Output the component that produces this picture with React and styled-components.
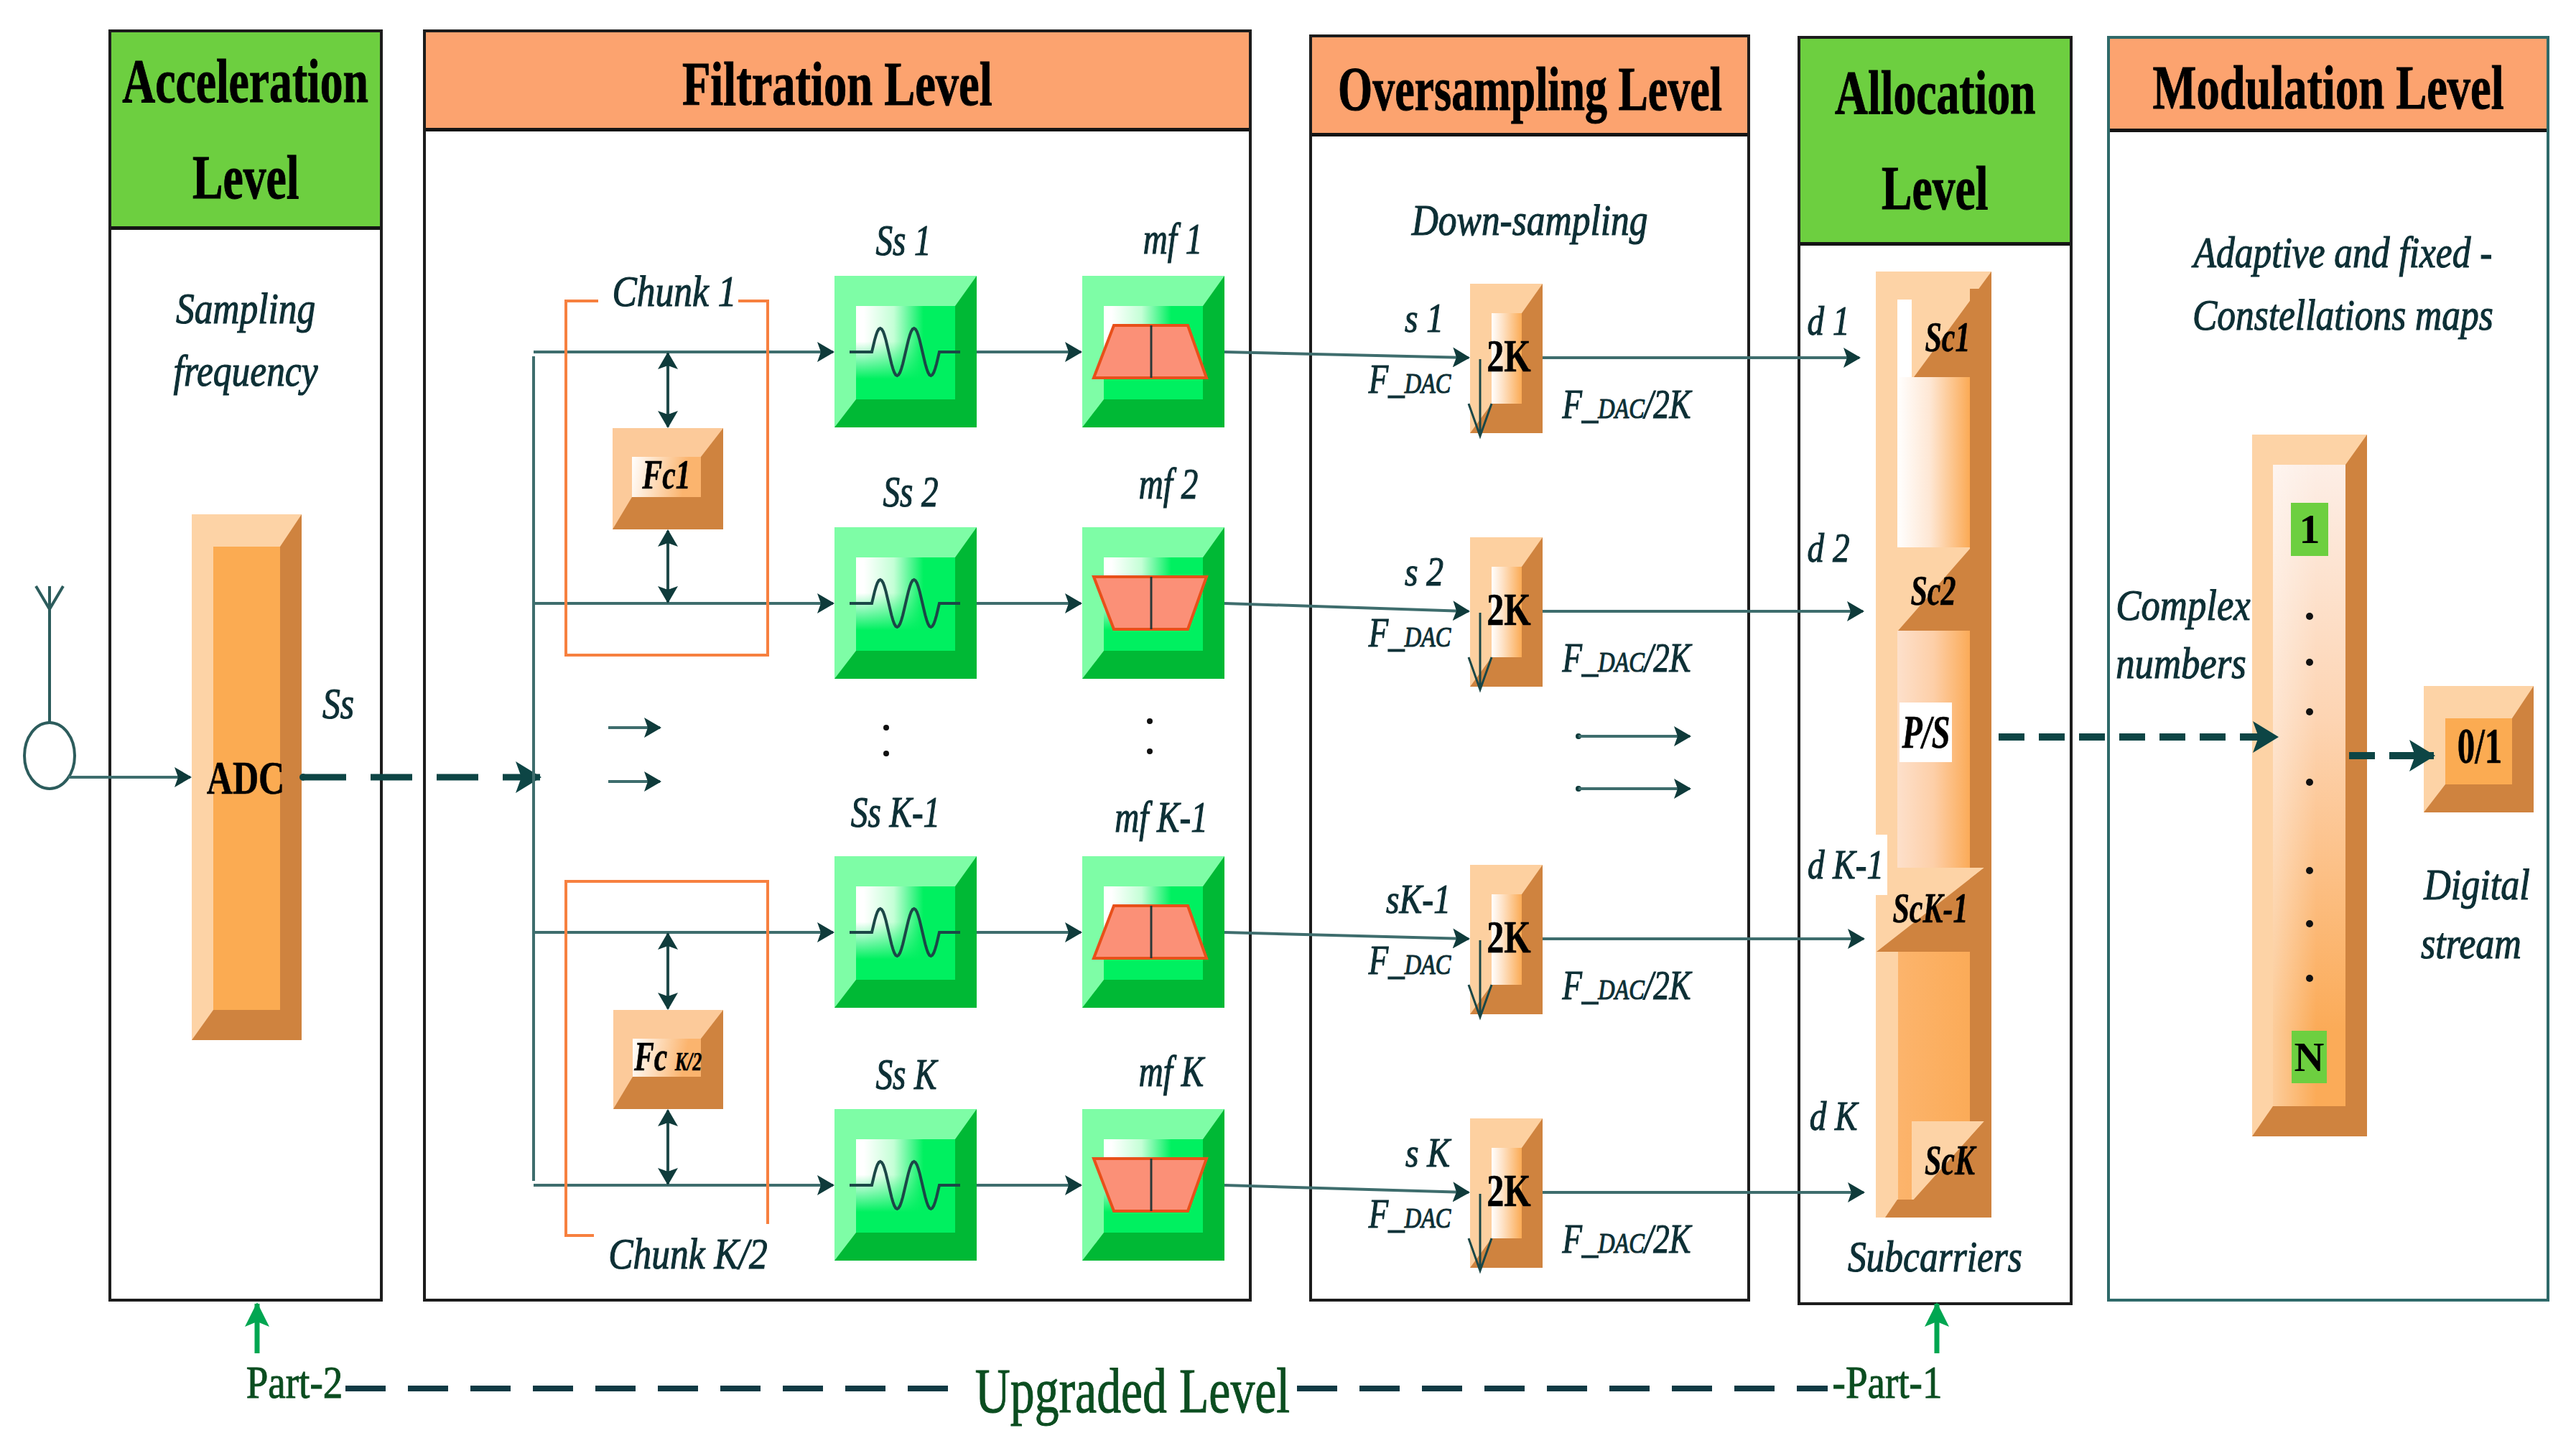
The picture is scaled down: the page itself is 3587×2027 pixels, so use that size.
import React from "react";
import styled, { createGlobalStyle } from "styled-components";

const INK = "#0d2f35";
const WIRE = "#3e6d6d";
const HEAD = "#0f3b3b";
const LIGHT = "#fdd3a6";
const DARK = "#cf833f";

const GlobalStyle = createGlobalStyle`
  html, body { margin: 0; padding: 0; background: #fff; }
  body { font-family: "Liberation Serif", "Times New Roman", serif; }
`;

const Page = styled.div`
  position: relative;
  width: 3587px;
  height: 2027px;
  overflow: hidden;
  background: #fff;
`;

const PanelRow = styled.div`
  display: flex;
  align-items: flex-start;
  padding-left: 151px;
`;

const Panel = styled.section`
  box-sizing: border-box;
  flex: none;
  width: ${p => p.$w}px;
  height: ${p => p.$h}px;
  margin-top: ${p => p.$top}px;
  margin-left: ${p => p.$gap}px;
  border: 4px solid ${p => (p.$teal ? "#2f6a6a" : "#1c1c1c")};
  display: flex;
  flex-direction: column;
`;

const Header = styled.header`
  box-sizing: border-box;
  flex: none;
  height: ${p => p.$h}px;
  padding-top: ${p => p.$pad || 0}px;
  background: ${p => (p.$tone === "green" ? "#6dcf40" : "#fca36f")};
  border-bottom: 5px solid #141414;
  display: flex;
  flex-direction: column;
  align-items: center;
  justify-content: center;
`;

const Title = styled.span`
  display: block;
  font-size: 86px;
  font-weight: 700;
  line-height: ${p => p.$lh || 86}px;
  color: #000;
  -webkit-text-stroke: 1px #000;
  white-space: nowrap;
  transform: scaleX(${p => p.$sx || 0.75});
`;

const Body = styled.div`
  flex: 1;
  display: flex;
  flex-direction: column;
  align-items: center;
  justify-content: ${p => (p.$end ? "flex-end" : "flex-start")};
  padding: ${p => p.$pad || "0"};
`;

const Caption = styled.p`
  margin: 0;
  font-size: 62px;
  line-height: 87px;
  font-style: italic;
  color: ${INK};
  -webkit-text-stroke: 1.2px ${INK};
  white-space: nowrap;
  text-align: center;
  transform: scaleX(0.83);
`;

const Canvas = styled.div`
  position: absolute;
  inset: 0;
  pointer-events: none;
`;

const tones = {
  green: {
    light: "#7efda6",
    dark: "#00b935",
    face: "linear-gradient(to bottom, rgba(0,240,96,0) 38%, #00f060 78%), linear-gradient(to right, #ffffff 8%, #c4ffd6 38%, #00f060 68%)",
  },
  amber: { light: LIGHT, dark: DARK, face: "#fbab52" },
  fade: {
    light: "#fdd0a0",
    dark: DARK,
    face: "linear-gradient(to right, #ffffff 0%, #fee3c8 35%, #fbab55 100%)",
  },
  fc: {
    light: "#fcca9a",
    dark: DARK,
    face: "linear-gradient(100deg, #ffffff 0%, #fee2c6 30%, #fbb46e 75%)",
  },
  column: {
    light: LIGHT,
    dark: DARK,
    face: "linear-gradient(to right, rgba(255,255,255,0.4), rgba(255,255,255,0) 60%), linear-gradient(to bottom, #fdeee6 0%, #fdd4b2 40%, #fbab58 88%)",
  },
};

const Block = styled.div`
  position: absolute;
  box-sizing: border-box;
  left: ${p => p.$x}px;
  top: ${p => p.$y}px;
  width: ${p => p.$w}px;
  height: ${p => p.$h}px;
  border-style: solid;
  border-width: ${p => p.$bw.map(v => v + "px").join(" ")};
  border-color: ${p => `${tones[p.$tone].light} ${tones[p.$tone].dark} ${tones[p.$tone].dark} ${tones[p.$tone].light}`};
  background: ${p => tones[p.$tone].face};
`;

const Art = styled.svg`
  position: absolute;
  left: 0;
  top: 0;
  overflow: visible;
`;

const Chip = styled.div`
  position: absolute;
  left: ${p => p.$x}px;
  top: ${p => p.$y}px;
  width: ${p => p.$w}px;
  height: ${p => p.$h}px;
  background: #6dcf40;
  display: flex;
  align-items: center;
  justify-content: center;
  font-size: 58px;
  font-weight: 700;
  color: #000;
  line-height: 1;
`;

const Label = styled.span`
  position: absolute;
  left: ${p => p.$x}px;
  top: ${p => p.$b - 0.3375 * p.$fs}px;
  font-size: ${p => p.$fs}px;
  line-height: 1;
  white-space: nowrap;
  color: ${INK};
  -webkit-text-stroke: 1.2px ${INK};
  font-style: italic;
  background: ${p => p.$bg || "transparent"};
  padding: ${p => (p.$bg ? "14px 6px" : "0")};
  transform: translate(-50%, -50%) scaleX(${p => p.$sx || 0.8});
`;

const Tag = styled(Label)`
  color: #000;
  -webkit-text-stroke: 0.6px #000;
  font-weight: 700;
`;

const Strong = styled(Label)`
  color: #000;
  -webkit-text-stroke: 0.6px #000;
  font-weight: 700;
  font-style: normal;
`;

const PartText = styled(Label)`
  color: #0b4d20;
  -webkit-text-stroke: 1px #0b4d20;
  font-style: normal;
`;

const Small = styled.span`
  font-size: ${p => p.$k || 0.7}em;
`;

const rows = [
  { c: 490, oy: 498, ss: ["Ss 1", 1258, 355], mf: ["mf 1", 1633, 353], wide: "bottom", s: ["s 1", 1983], d: ["d 1", 2546, 466], tip: 2589 },
  { c: 840, oy: 851, ss: ["Ss 2", 1268, 705], mf: ["mf 2", 1627, 694], wide: "top", s: ["s 2", 1983], d: ["d 2", 2546, 782], tip: 2594 },
  { c: 1298, oy: 1307, ss: ["Ss K-1", 1247, 1151], mf: ["mf K-1", 1617, 1158], wide: "bottom", s: ["sK-1", 1975], d: ["d K-1", 2570, 1223], tip: 2595 },
  { c: 1650, oy: 1660, ss: ["Ss K", 1262, 1516], mf: ["mf K", 1631, 1512], wide: "top", s: ["s K", 1988], d: ["d K", 2553, 1573], tip: 2595 },
];

const SS_X = 1162;
const MF_X = 1507;

function wavePath(x0, c) {
  let d = `M${x0 + 21},${c} L${x0 + 52},${c}`;
  for (let i = 0; i <= 48; i++) {
    const t = i / 48;
    const x = x0 + 52 + 94 * t;
    const y = c - 33 * Math.sin(t * 4 * Math.PI);
    d += ` L${x.toFixed(1)},${y.toFixed(1)}`;
  }
  return d + ` L${x0 + 175},${c}`;
}

function trapezoid(x0, c, wide) {
  const t = c - 37;
  const b = c + 36;
  return wide === "bottom"
    ? `${x0 + 44},${t} ${x0 + 147},${t} ${x0 + 173},${b} ${x0 + 16},${b}`
    : `${x0 + 16},${t} ${x0 + 173},${t} ${x0 + 147},${b} ${x0 + 44},${b}`;
}

function SubcarrierColumn() {
  return (
    <g>
      <rect x="2612" y="378" width="161" height="1317" fill={LIGHT} />
      <polygon points="2773,378 2773,525 2665,525" fill={DARK} />
      <rect x="2743" y="402" width="30" height="1293" fill={DARK} />
      <rect x="2642" y="417" width="20" height="108" fill="#fff" />
      <rect x="2642" y="525" width="101" height="237" fill="url(#scFace1)" />
      <polygon points="2743,764 2743,878 2643,878" fill={DARK} />
      <rect x="2642" y="878" width="101" height="330" fill="url(#scFace2)" />
      <rect x="2645" y="978" width="73" height="83" fill="#fff" />
      <polygon points="2612,1208 2763,1208 2613,1325" fill={LIGHT} />
      <polygon points="2763,1208 2773,1208 2773,1325 2613,1325" fill={DARK} />
      <rect x="2643" y="1325" width="100" height="345" fill="url(#scFace3)" />
      <polygon points="2662,1561 2763,1561 2662,1673" fill={LIGHT} />
      <polygon points="2763,1561 2773,1561 2773,1673 2662,1673" fill={DARK} />
      <polygon points="2642,1670 2773,1670 2773,1695 2625,1695" fill={DARK} />
    </g>
  );
}

function Wiring() {
  const thin = { stroke: WIRE, strokeWidth: 4, fill: "none" };
  const arrow = { ...thin, markerEnd: "url(#ah)" };
  const dbl = { stroke: "#1f4a4a", strokeWidth: 4, markerStart: "url(#ah)", markerEnd: "url(#ah)" };
  const thick = { stroke: "#0d4545", strokeWidth: 10, fill: "none", strokeDasharray: "36 20", markerEnd: "url(#big)" };
  const orange = { stroke: "#f7803f", strokeWidth: 4, fill: "none" };
  return (
    <Art width="3587" height="2027" viewBox="0 0 3587 2027">
      <defs>
        <marker id="ah" viewBox="0 0 24 28" refX="22" refY="14" markerWidth="24" markerHeight="28" markerUnits="userSpaceOnUse" orient="auto-start-reverse">
          <path d="M0,0 L24,14 L0,28 L5,14 Z" fill={HEAD} />
        </marker>
        <marker id="big" viewBox="0 0 36 44" refX="34" refY="22" markerWidth="36" markerHeight="44" markerUnits="userSpaceOnUse" orient="auto">
          <path d="M0,0 L36,22 L0,44 L8,22 Z" fill="#0d4545" />
        </marker>
        <marker id="grn" viewBox="0 0 34 34" refX="32" refY="17" markerWidth="34" markerHeight="34" markerUnits="userSpaceOnUse" orient="auto">
          <path d="M0,0 L34,17 L0,34 L7,17 Z" fill="#00a651" />
        </marker>
        <linearGradient id="scFace1" x1="0" x2="1" y1="0" y2="0">
          <stop offset="0" stopColor="#ffffff" />
          <stop offset="0.45" stopColor="#fee7d4" />
          <stop offset="1" stopColor="#fbaa55" />
        </linearGradient>
        <linearGradient id="scFace2" x1="0" x2="1" y1="0" y2="0">
          <stop offset="0" stopColor="#fde0cb" />
          <stop offset="0.5" stopColor="#fdcfa8" />
          <stop offset="1" stopColor="#fbab58" />
        </linearGradient>
        <linearGradient id="scFace3" x1="0" x2="1" y1="0" y2="0">
          <stop offset="0" stopColor="#fcb46c" />
          <stop offset="1" stopColor="#fbab58" />
        </linearGradient>
      </defs>

      <SubcarrierColumn />

      {/* antenna */}
      <path d="M50,816 L69,848 L88,816 M69,816 L69,1006" stroke="#2c5c5c" strokeWidth="4" fill="none" />
      <ellipse cx="69" cy="1052" rx="35" ry="46" stroke="#2c5c5c" strokeWidth="4" fill="none" />
      <path d="M95,1082 L265,1082" {...arrow} />

      {/* ADC to bus */}
      <circle cx="422" cy="1082" r="5" fill="#0d4545" />
      <path d="M424,1082 L752,1082" stroke="#0d4545" strokeWidth="9" strokeDasharray="58 34" fill="none" markerEnd="url(#big)" />

      {/* bus and branches */}
      <path d="M743,496 L743,1644" {...thin} />
      {rows.map(r => (
        <path key={"b" + r.c} d={`M743,${r.c} L1160,${r.c}`} {...arrow} />
      ))}

      {/* chunk brackets */}
      <path d="M833,419 L788,419 L788,912 L1069,912 L1069,419 L1028,419" {...orange} />
      <path d="M827,1720 L788,1720 L788,1227 L1069,1227 L1069,1704" {...orange} />
      <path d="M930,492 L930,594" {...dbl} />
      <path d="M930,739 L930,838" {...dbl} />
      <path d="M930,1300 L930,1404" {...dbl} />
      <path d="M930,1546 L930,1648" {...dbl} />

      <path d="M847,1013 L919,1013" {...arrow} />
      <path d="M847,1088 L919,1088" {...arrow} />
      <circle cx="1234" cy="1013" r="4" fill="#111" />
      <circle cx="1234" cy="1049" r="4" fill="#111" />
      <circle cx="1601" cy="1004" r="4" fill="#111" />
      <circle cx="1601" cy="1046" r="4" fill="#111" />

      {rows.map(r => (
        <g key={"r" + r.c}>
          <path d={wavePath(SS_X, r.c)} stroke="#1b4747" strokeWidth="4" fill="none" />
          <polygon points={trapezoid(MF_X, r.c, r.wide)} fill="#fb9077" stroke="#e8501a" strokeWidth="4" />
          <path d={`M${MF_X + 96},${r.c - 37} L${MF_X + 96},${r.c + 36}`} stroke="#2b3838" strokeWidth="3" />
          <path d={`M1360,${r.c} L1505,${r.c}`} {...arrow} />
          <path d={`M1705,${r.c} L2045,${r.oy}`} {...arrow} />
          <path d={`M2148,${r.oy} L${r.tip},${r.oy}`} {...arrow} />
          <path d={`M2061,${r.oy + 2} L2061,${r.oy + 109} M2045,${r.oy + 64} L2061,${r.oy + 109} L2077,${r.oy + 64}`} stroke="#1b4747" strokeWidth="3" fill="none" />
        </g>
      ))}

      <circle cx="2198" cy="1025" r="4" fill={HEAD} />
      <path d="M2198,1025 L2353,1025" {...arrow} />
      <circle cx="2198" cy="1098" r="4" fill={HEAD} />
      <path d="M2198,1098 L2353,1098" {...arrow} />

      {/* serial stream to modulation */}
      <path d="M2783,1026 L3171,1026" {...thick} />
      <path d="M3271,1052 L3389,1052" {...thick} />
      {[858, 922, 991, 1089, 1212, 1286, 1362].map(y => (
        <circle key={"m" + y} cx="3216" cy={y} r="5" fill="#111" />
      ))}

      {/* upgraded level */}
      <path d="M358,1884 L358,1815" stroke="#00a651" strokeWidth="7" markerEnd="url(#grn)" />
      <path d="M2697,1884 L2697,1815" stroke="#00a651" strokeWidth="7" markerEnd="url(#grn)" />
      <path d="M481,1933 L1350,1933" stroke="#0f3a44" strokeWidth="8" strokeDasharray="56 31" fill="none" />
      <path d="M1806,1933 L2545,1933" stroke="#0f3a44" strokeWidth="8" strokeDasharray="56 31" fill="none" />
    </Art>
  );
}

function FDac({ x, b, over }) {
  return (
    <Label $x={x} $b={b} $fs={56} $sx={0.8}>
      F_<Small $k={0.72}>DAC</Small>
      {over ? "/2K" : null}
    </Label>
  );
}

export default function App() {
  return (
    <Page>
      <GlobalStyle />
      <PanelRow>
        <Panel $w={382} $h={1771} $top={41} $gap={0}>
          <Header $tone="green" $h={275}>
            <Title $lh={134} $sx={0.74}>Acceleration</Title>
            <Title $lh={134} $sx={0.74}>Level</Title>
          </Header>
          <Body $pad="66px 0 0">
            <Caption>Sampling</Caption>
            <Caption>frequency</Caption>
          </Body>
        </Panel>
        <Panel $w={1154} $h={1771} $top={41} $gap={56}>
          <Header $tone="orange" $h={138} $pad={10}>
            <Title>Filtration Level</Title>
          </Header>
        </Panel>
        <Panel $w={614} $h={1764} $top={48} $gap={80}>
          <Header $tone="orange" $h={138} $pad={10}>
            <Title $sx={0.72}>Oversampling Level</Title>
          </Header>
          <Body $pad="73px 0 0">
            <Caption>Down-sampling</Caption>
          </Body>
        </Panel>
        <Panel $w={383} $h={1767} $top={50} $gap={66}>
          <Header $tone="green" $h={288}>
            <Title $lh={133} $sx={0.74}>Allocation</Title>
            <Title $lh={133} $sx={0.74}>Level</Title>
          </Header>
          <Body $end $pad="0 0 20px">
            <Caption>Subcarriers</Caption>
          </Body>
        </Panel>
        <Panel $w={616} $h={1762} $top={50} $gap={48} $teal>
          <Header $tone="orange" $h={130} $pad={10}>
            <Title>Modulation Level</Title>
          </Header>
          <Body $pad="124px 0 0 40px">
            <Caption>Adaptive and fixed -</Caption>
            <Caption>Constellations maps</Caption>
          </Body>
        </Panel>
      </PanelRow>

      <Canvas>
        <Block $tone="amber" $x={267} $y={716} $w={153} $h={732} $bw={[45, 30, 42, 30]} />
        <Block $tone="fc" $x={853} $y={596} $w={154} $h={141} $bw={[40, 31, 45, 27]} />
        <Block $tone="fc" $x={854} $y={1406} $w={153} $h={138} $bw={[40, 31, 45, 27]} />
        {rows.map(r => (
          <React.Fragment key={"k" + r.c}>
            <Block $tone="green" $x={SS_X} $y={r.c - 106} $w={198} $h={211} $bw={[42, 30, 39, 30]} />
            <Block $tone="green" $x={MF_X} $y={r.c - 106} $w={198} $h={211} $bw={[42, 30, 39, 30]} />
            <Block $tone="fade" $x={2047} $y={r.oy - 103} $w={101} $h={208} $bw={[41, 29, 41, 30]} />
          </React.Fragment>
        ))}
        <Block $tone="column" $x={3136} $y={605} $w={160} $h={977} $bw={[42, 30, 42, 29]} />
        <Block $tone="amber" $x={3375} $y={955} $w={153} $h={176} $bw={[45, 30, 39, 30]} />

        <Wiring />

        <Chip $x={3190} $y={700} $w={52} $h={74}>1</Chip>
        <Chip $x={3191} $y={1435} $w={49} $h={73}>N</Chip>

        <Label $x={471} $b={1000} $fs={62} $sx={0.8}>Ss</Label>
        <Strong $x={342} $b={1105} $fs={66} $sx={0.76}>ADC</Strong>

        <Label $x={939} $b={426} $fs={62} $sx={0.83}>Chunk 1</Label>
        <Label $x={958} $b={1766} $fs={62} $sx={0.83}>Chunk K/2</Label>
        <Tag $x={928} $b={681} $fs={58} $sx={0.72}>Fc1</Tag>
        <Tag $x={930} $b={1491} $fs={58} $sx={0.72}>
          Fc <Small $k={0.62}>K/2</Small>
        </Tag>

        {rows.map(r => (
          <React.Fragment key={"l" + r.c}>
            <Label $x={r.ss[1]} $b={r.ss[2]} $fs={62} $sx={0.76}>{r.ss[0]}</Label>
            <Label $x={r.mf[1]} $b={r.mf[2]} $fs={62} $sx={0.76}>{r.mf[0]}</Label>
            <Label $x={r.s[1]} $b={r.oy - 36} $fs={56} $sx={0.85}>{r.s[0]}</Label>
            <FDac x={1963} b={r.oy + 49} />
            <FDac x={2265} b={r.oy + 84} over />
            <Strong $x={2101} $b={r.oy + 20} $fs={64} $sx={0.75}>2K</Strong>
            <Label $x={r.d[1]} $b={r.d[2]} $fs={56} $sx={0.84} $bg={r.d[0] === "d K-1" ? "#fff" : undefined}>
              {r.d[0]}
            </Label>
          </React.Fragment>
        ))}

        <Tag $x={2712} $b={489} $fs={60} $sx={0.7}>Sc1</Tag>
        <Tag $x={2692} $b={842} $fs={60} $sx={0.7}>Sc2</Tag>
        <Tag $x={2682} $b={1041} $fs={66} $sx={0.7}>P/S</Tag>
        <Tag $x={2688} $b={1284} $fs={60} $sx={0.7}>ScK-1</Tag>
        <Tag $x={2715} $b={1635} $fs={60} $sx={0.7}>ScK</Tag>

        <Label $x={3040} $b={863} $fs={62} $sx={0.85}>Complex</Label>
        <Label $x={3037} $b={944} $fs={62} $sx={0.85}>numbers</Label>
        <Strong $x={3453} $b={1063} $fs={70} $sx={0.7}>0/1</Strong>
        <Label $x={3449} $b={1252} $fs={62} $sx={0.84}>Digital</Label>
        <Label $x={3441} $b={1334} $fs={62} $sx={0.84}>stream</Label>

        <PartText $x={410} $b={1947} $fs={64} $sx={0.86}>Part-2</PartText>
        <PartText $x={1577} $b={1967} $fs={88} $sx={0.77}>Upgraded Level</PartText>
        <PartText $x={2628} $b={1947} $fs={64} $sx={0.86}>-Part-1</PartText>
      </Canvas>
    </Page>
  );
}
